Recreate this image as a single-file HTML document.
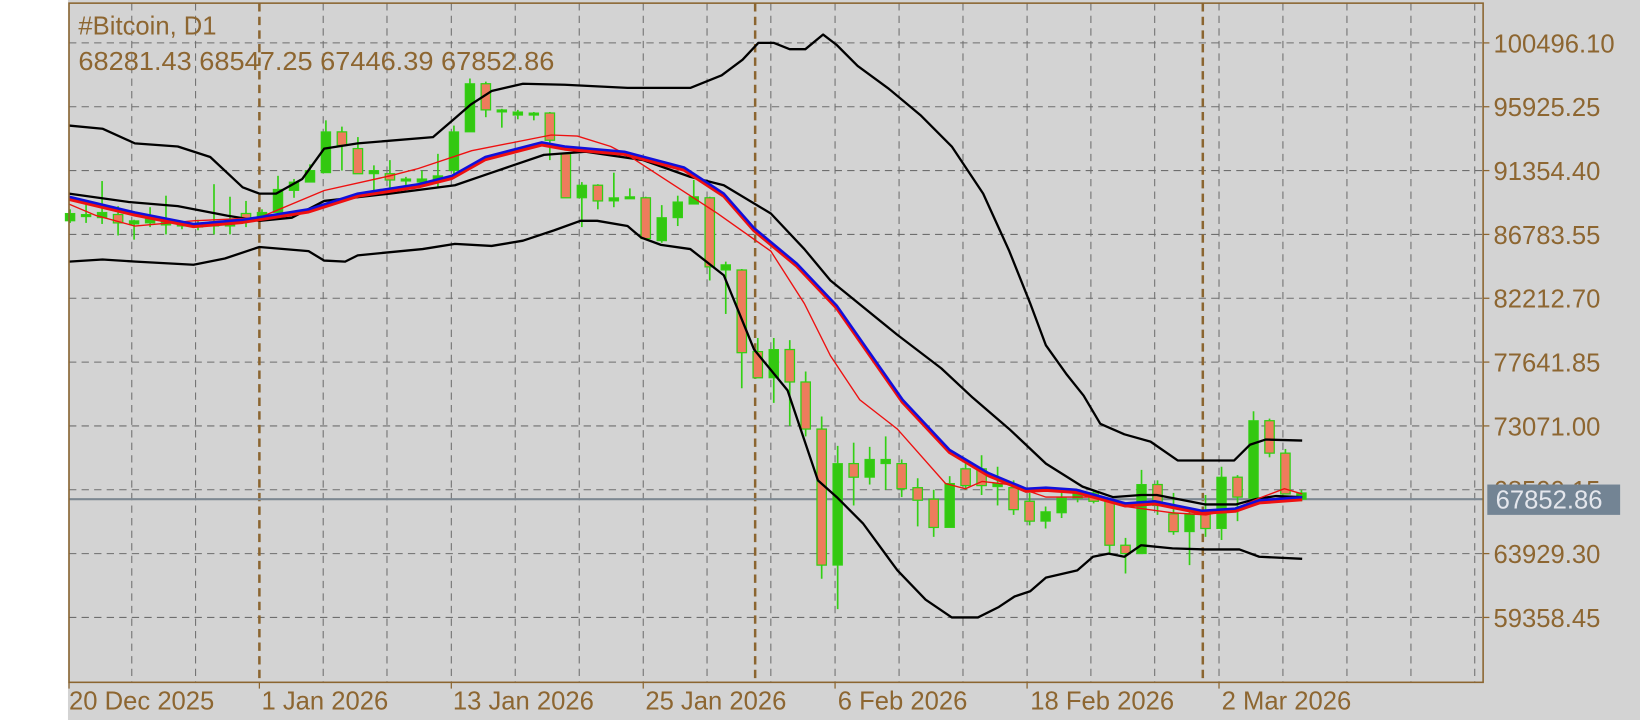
<!DOCTYPE html>
<html><head><meta charset="utf-8"><style>
html,body{margin:0;padding:0;background:#fff;}
svg{display:block;}
.g{stroke:#6e6e6e;stroke-width:1;stroke-dasharray:7,5;fill:none;}
.s{stroke:#8b6530;stroke-width:2.4;stroke-dasharray:8,5;fill:none;}
.w{stroke:#33d014;stroke-width:1.6;}
.u{fill:#33c811;stroke:#33d014;stroke-width:1;}
.d{fill:#ee7c5c;stroke:#33d014;stroke-width:1.2;}
.t{font-family:"Liberation Sans",sans-serif;font-size:24.5px;fill:#8d6631;}
.bb{fill:none;stroke:#000;stroke-width:2.2;stroke-linejoin:round;}
</style></head><body>
<svg width="1640" height="720" viewBox="0 0 1568 688" preserveAspectRatio="none" xmlns="http://www.w3.org/2000/svg">
<rect x="0" y="0" width="1568" height="688" fill="#fff"/>
<rect x="65" y="0" width="1503" height="688" fill="#d3d3d3"/>
<g class="g">
<line x1="66" x2="1418" y1="41" y2="41"/><line x1="66" x2="1418" y1="102" y2="102"/><line x1="66" x2="1418" y1="163" y2="163"/><line x1="66" x2="1418" y1="224" y2="224"/><line x1="66" x2="1418" y1="285" y2="285"/><line x1="66" x2="1418" y1="346" y2="346"/><line x1="66" x2="1418" y1="407" y2="407"/><line x1="66" x2="1418" y1="468" y2="468"/><line x1="66" x2="1418" y1="529" y2="529"/><line x1="66" x2="1418" y1="590" y2="590"/>
<line x1="126" x2="126" y1="3" y2="652"/><line x1="187" x2="187" y1="3" y2="652"/><line x1="309" x2="309" y1="3" y2="652"/><line x1="370" x2="370" y1="3" y2="652"/><line x1="431.5" x2="431.5" y1="3" y2="652"/><line x1="492.6" x2="492.6" y1="3" y2="652"/><line x1="553.8" x2="553.8" y1="3" y2="652"/><line x1="615" x2="615" y1="3" y2="652"/><line x1="676" x2="676" y1="3" y2="652"/><line x1="737" x2="737" y1="3" y2="652"/><line x1="798.4" x2="798.4" y1="3" y2="652"/><line x1="859.6" x2="859.6" y1="3" y2="652"/><line x1="920.7" x2="920.7" y1="3" y2="652"/><line x1="982" x2="982" y1="3" y2="652"/><line x1="1043" x2="1043" y1="3" y2="652"/><line x1="1104" x2="1104" y1="3" y2="652"/><line x1="1165.5" x2="1165.5" y1="3" y2="652"/><line x1="1226.6" x2="1226.6" y1="3" y2="652"/><line x1="1287.8" x2="1287.8" y1="3" y2="652"/><line x1="1349" x2="1349" y1="3" y2="652"/><line x1="1410" x2="1410" y1="3" y2="652"/>
</g>
<g class="s"><line x1="248" x2="248" y1="3" y2="652"/><line x1="722" x2="722" y1="3" y2="652"/><line x1="1150" x2="1150" y1="3" y2="652"/></g>
<line x1="66" x2="1418" y1="477" y2="477" stroke="#7d8892" stroke-width="2"/>
<g>
<line class="w" x1="67" x2="67" y1="200" y2="213"/><rect class="u" x="62.5" y="204" width="9" height="7"/>
<line class="w" x1="82.3" x2="82.3" y1="195" y2="213"/><rect class="u" x="77.8" y="205" width="9" height="2"/>
<line class="w" x1="97.6" x2="97.6" y1="173" y2="214"/><rect class="u" x="93.1" y="203" width="9" height="5"/>
<line class="w" x1="112.9" x2="112.9" y1="197" y2="225"/><rect class="d" x="108.4" y="205" width="9" height="8"/>
<line class="w" x1="128.2" x2="128.2" y1="210" y2="229"/><rect class="u" x="123.7" y="211" width="9" height="3"/>
<line class="w" x1="143.5" x2="143.5" y1="198" y2="217"/><rect class="u" x="139" y="209" width="9" height="4"/>
<line class="w" x1="158.7" x2="158.7" y1="187" y2="224"/><rect class="u" x="154.2" y="211" width="9" height="4"/>
<line class="w" x1="174" x2="174" y1="211" y2="219"/><rect class="u" x="169.5" y="214" width="9" height="2"/>
<line class="w" x1="189.3" x2="189.3" y1="210" y2="220"/><rect class="u" x="184.8" y="214" width="9" height="3"/>
<line class="w" x1="204.6" x2="204.6" y1="176" y2="224"/><rect class="u" x="200.1" y="212" width="9" height="4"/>
<line class="w" x1="219.9" x2="219.9" y1="188" y2="224"/><rect class="u" x="215.4" y="210" width="9" height="6"/>
<line class="w" x1="235.2" x2="235.2" y1="192" y2="217"/><rect class="d" x="230.7" y="204" width="9" height="5"/>
<line class="w" x1="250.5" x2="250.5" y1="200" y2="209"/><rect class="u" x="246" y="203" width="9" height="5"/>
<line class="w" x1="265.8" x2="265.8" y1="168" y2="204"/><rect class="u" x="261.3" y="181" width="9" height="22"/>
<line class="w" x1="281.1" x2="281.1" y1="171" y2="189"/><rect class="u" x="276.6" y="174" width="9" height="8"/>
<line class="w" x1="296.4" x2="296.4" y1="157" y2="174"/><rect class="u" x="291.9" y="163" width="9" height="11"/>
<line class="w" x1="311.6" x2="311.6" y1="115" y2="165"/><rect class="u" x="307.1" y="126" width="9" height="39"/>
<line class="w" x1="326.9" x2="326.9" y1="121" y2="163"/><rect class="d" x="322.4" y="126" width="9" height="13"/>
<line class="w" x1="342.2" x2="342.2" y1="131" y2="166"/><rect class="d" x="337.7" y="142" width="9" height="24"/>
<line class="w" x1="357.5" x2="357.5" y1="158" y2="184"/><rect class="u" x="353" y="163" width="9" height="3"/>
<line class="w" x1="372.8" x2="372.8" y1="153" y2="184"/><rect class="d" x="368.3" y="166" width="9" height="6"/>
<line class="w" x1="388.1" x2="388.1" y1="169" y2="177"/><rect class="u" x="383.6" y="171" width="9" height="2"/>
<line class="w" x1="403.4" x2="403.4" y1="163" y2="179"/><rect class="u" x="398.9" y="171" width="9" height="3"/>
<line class="w" x1="418.7" x2="418.7" y1="147" y2="179"/><rect class="u" x="414.2" y="168" width="9" height="5"/>
<line class="w" x1="434" x2="434" y1="120" y2="168"/><rect class="u" x="429.5" y="126" width="9" height="37"/>
<line class="w" x1="449.3" x2="449.3" y1="75" y2="126"/><rect class="u" x="444.8" y="80" width="9" height="46"/>
<line class="w" x1="464.5" x2="464.5" y1="78" y2="112"/><rect class="d" x="460" y="80" width="9" height="25"/>
<line class="w" x1="479.8" x2="479.8" y1="104" y2="122"/><rect class="u" x="475.3" y="105" width="9" height="2"/>
<line class="w" x1="495.1" x2="495.1" y1="105" y2="114"/><rect class="u" x="490.6" y="107" width="9" height="3"/>
<line class="w" x1="510.4" x2="510.4" y1="107" y2="115"/><rect class="u" x="505.9" y="108" width="9" height="2"/>
<line class="w" x1="525.7" x2="525.7" y1="107" y2="153"/><rect class="d" x="521.2" y="108" width="9" height="26"/>
<line class="w" x1="541" x2="541" y1="147" y2="189"/><rect class="d" x="536.5" y="147" width="9" height="42"/>
<line class="w" x1="556.3" x2="556.3" y1="174" y2="217"/><rect class="u" x="551.8" y="177" width="9" height="12"/>
<line class="w" x1="571.6" x2="571.6" y1="176" y2="200"/><rect class="d" x="567.1" y="177" width="9" height="15"/>
<line class="w" x1="586.9" x2="586.9" y1="165" y2="198"/><rect class="u" x="582.4" y="189" width="9" height="3"/>
<line class="w" x1="602.2" x2="602.2" y1="180" y2="190"/><rect class="u" x="597.7" y="188" width="9" height="2"/>
<line class="w" x1="617.4" x2="617.4" y1="188" y2="229"/><rect class="d" x="612.9" y="189" width="9" height="39"/>
<line class="w" x1="632.7" x2="632.7" y1="196" y2="232"/><rect class="u" x="628.2" y="208" width="9" height="22"/>
<line class="w" x1="648" x2="648" y1="187" y2="216"/><rect class="u" x="643.5" y="193" width="9" height="15"/>
<line class="w" x1="663.3" x2="663.3" y1="172" y2="195"/><rect class="u" x="658.8" y="188" width="9" height="7"/>
<line class="w" x1="678.6" x2="678.6" y1="188" y2="268"/><rect class="d" x="674.1" y="189" width="9" height="66"/>
<line class="w" x1="693.9" x2="693.9" y1="250" y2="300"/><rect class="u" x="689.4" y="253" width="9" height="5"/>
<line class="w" x1="709.2" x2="709.2" y1="257" y2="371"/><rect class="d" x="704.7" y="258" width="9" height="79"/>
<line class="w" x1="724.5" x2="724.5" y1="323" y2="361"/><rect class="d" x="720" y="336" width="9" height="25"/>
<line class="w" x1="739.8" x2="739.8" y1="323" y2="385"/><rect class="u" x="735.3" y="334" width="9" height="27"/>
<line class="w" x1="755.1" x2="755.1" y1="325" y2="407"/><rect class="d" x="750.6" y="334" width="9" height="31"/>
<line class="w" x1="770.3" x2="770.3" y1="355" y2="417"/><rect class="d" x="765.8" y="365" width="9" height="45"/>
<line class="w" x1="785.6" x2="785.6" y1="398" y2="553"/><rect class="d" x="781.1" y="410" width="9" height="130"/>
<line class="w" x1="800.9" x2="800.9" y1="426" y2="582"/><rect class="u" x="796.4" y="443" width="9" height="97"/>
<line class="w" x1="816.2" x2="816.2" y1="423" y2="483"/><rect class="d" x="811.7" y="443" width="9" height="13"/>
<line class="w" x1="831.5" x2="831.5" y1="427" y2="463"/><rect class="u" x="827" y="439" width="9" height="17"/>
<line class="w" x1="846.8" x2="846.8" y1="417" y2="468"/><rect class="u" x="842.3" y="439" width="9" height="4"/>
<line class="w" x1="862.1" x2="862.1" y1="439" y2="475"/><rect class="d" x="857.6" y="443" width="9" height="24"/>
<line class="w" x1="877.4" x2="877.4" y1="457" y2="503"/><rect class="d" x="872.9" y="466" width="9" height="12"/>
<line class="w" x1="892.7" x2="892.7" y1="468" y2="513"/><rect class="d" x="888.2" y="477" width="9" height="27"/>
<line class="w" x1="908" x2="908" y1="455" y2="504"/><rect class="u" x="903.5" y="462" width="9" height="42"/>
<line class="w" x1="923.2" x2="923.2" y1="441" y2="468"/><rect class="d" x="918.7" y="448" width="9" height="16"/>
<line class="w" x1="938.5" x2="938.5" y1="435" y2="473"/><rect class="d" x="934" y="448" width="9" height="16"/>
<line class="w" x1="953.8" x2="953.8" y1="446" y2="483"/><rect class="u" x="949.3" y="462" width="9" height="3"/>
<line class="w" x1="969.1" x2="969.1" y1="459" y2="492"/><rect class="d" x="964.6" y="466" width="9" height="21"/>
<line class="w" x1="984.4" x2="984.4" y1="471" y2="502"/><rect class="d" x="979.9" y="479" width="9" height="19"/>
<line class="w" x1="999.7" x2="999.7" y1="484" y2="505"/><rect class="u" x="995.2" y="489" width="9" height="9"/>
<line class="w" x1="1015" x2="1015" y1="471" y2="495"/><rect class="u" x="1010.5" y="476" width="9" height="14"/>
<line class="w" x1="1030.3" x2="1030.3" y1="468" y2="480"/><rect class="u" x="1025.8" y="471" width="9" height="5"/>
<line class="w" x1="1045.6" x2="1045.6" y1="468" y2="481"/><rect class="d" x="1041.1" y="471" width="9" height="8"/>
<line class="w" x1="1060.9" x2="1060.9" y1="478" y2="529"/><rect class="d" x="1056.4" y="479" width="9" height="42"/>
<line class="w" x1="1076.1" x2="1076.1" y1="514" y2="548"/><rect class="d" x="1071.6" y="521" width="9" height="8"/>
<line class="w" x1="1091.4" x2="1091.4" y1="449" y2="529"/><rect class="u" x="1086.9" y="463" width="9" height="66"/>
<line class="w" x1="1106.7" x2="1106.7" y1="459" y2="492"/><rect class="d" x="1102.2" y="463" width="9" height="20"/>
<line class="w" x1="1122" x2="1122" y1="471" y2="511"/><rect class="d" x="1117.5" y="491" width="9" height="17"/>
<line class="w" x1="1137.3" x2="1137.3" y1="486" y2="540"/><rect class="u" x="1132.8" y="491" width="9" height="17"/>
<line class="w" x1="1152.6" x2="1152.6" y1="473" y2="513"/><rect class="d" x="1148.1" y="491" width="9" height="14"/>
<line class="w" x1="1167.9" x2="1167.9" y1="446" y2="516"/><rect class="u" x="1163.4" y="456" width="9" height="49"/>
<line class="w" x1="1183.2" x2="1183.2" y1="454" y2="498"/><rect class="d" x="1178.7" y="456" width="9" height="19"/>
<line class="w" x1="1198.5" x2="1198.5" y1="393" y2="476"/><rect class="u" x="1194" y="402" width="9" height="74"/>
<line class="w" x1="1213.8" x2="1213.8" y1="400" y2="437"/><rect class="d" x="1209.3" y="402" width="9" height="31"/>
<line class="w" x1="1229" x2="1229" y1="429" y2="472"/><rect class="d" x="1224.5" y="433" width="9" height="39"/>
<line class="w" x1="1244.3" x2="1244.3" y1="468" y2="479"/><rect class="u" x="1239.8" y="471" width="9" height="6"/>
</g>
<polyline class="bb" points="66,120 98,123 129,137 170,140 201,150 232,179 248,185 264,185 289,171 310,142 342,137 414,131 435,113 450,100 470,87 500,80 540,81 600,84 660,84 690,72 710,57 725,41 740,41 755,47 770,47 787,33 800,43 820,63 850,85 880,110 910,140 940,185 965,240 985,290 1000,330 1020,358 1036,378 1052,405 1075,415 1100,422 1126,440 1180,440 1195,425 1210,420 1245,421"/>
<polyline class="bb" points="66,185 123,193 170,197 217,206 248,211 279,208 310,192 373,185 435,177 470,165 520,148 560,145 615,153 660,169 692,177 737,204 769,238 794,268 858,320 900,352 930,380 965,410 1000,443 1035,465 1064,475 1091,473 1106,473 1152,482 1182,482 1200,477 1220,474 1245,475"/>
<polyline class="bb" points="66,250 98,248 130,250 185,253 215,247 248,236 295,240 310,249 330,250 342,244 404,238 435,233 470,235 500,230 530,220 555,211 571,211 600,216 613,227 632,234 660,238 692,263 721,334 753,373 782,459 800,475 825,500 858,545 885,573 910,590 935,590 955,580 970,570 985,565 1000,552 1030,545 1045,532 1060,529 1075,532 1091,521 1121,524 1152,525 1185,525 1204,532 1245,534"/>
<polyline fill="none" stroke="#ee1010" stroke-width="1.3" points="66,195 92,206 129,216 185,211 248,208 310,182 373,168 400,161 451,144 527,129 552,130 584,140 603,150 686,204 737,240 769,290 794,340 822,382 858,410 904,462 923,467 939,460 965,463 1000,475 1045,475 1076,484 1121,490 1153,492 1181,486 1204,476 1228,467 1245,472"/>
<polyline fill="none" stroke="#ee1010" stroke-width="3.4" stroke-linejoin="round" transform="translate(0,2.3)" points="66,188 129,203 185,214 232,210 295,200 342,185 400,176 432,168 464,150 518,136 540,140 597,145 654,160 692,185 721,218 762,252 800,292 863,382 908,430 945,452 981,467 1000,466 1029,468 1076,481 1104,479 1149,488 1181,486 1204,478 1245,475"/>
<polyline fill="none" stroke="#1010dd" stroke-width="2.4" stroke-linejoin="round" points="66,188 129,203 185,214 232,210 295,200 342,185 400,176 432,168 464,150 518,136 540,140 597,145 654,160 692,185 721,218 762,252 800,292 863,382 908,430 945,452 981,467 1000,466 1029,468 1076,481 1104,479 1149,488 1181,486 1204,478 1245,475"/>
<rect x="66" y="3" width="1352" height="649" fill="none" stroke="#8b6530" stroke-width="1.5"/>
<g stroke="#8b6530" stroke-width="1.2">
<line x1="1418" x2="1424" y1="41" y2="41"/><line x1="1418" x2="1424" y1="102" y2="102"/><line x1="1418" x2="1424" y1="163" y2="163"/><line x1="1418" x2="1424" y1="224" y2="224"/><line x1="1418" x2="1424" y1="285" y2="285"/><line x1="1418" x2="1424" y1="346" y2="346"/><line x1="1418" x2="1424" y1="407" y2="407"/><line x1="1418" x2="1424" y1="529" y2="529"/><line x1="1418" x2="1424" y1="590" y2="590"/>
<line x1="66" x2="66" y1="652" y2="658"/><line x1="248" x2="248" y1="652" y2="658"/><line x1="431.5" x2="431.5" y1="652" y2="658"/><line x1="615" x2="615" y1="652" y2="658"/><line x1="798.4" x2="798.4" y1="652" y2="658"/><line x1="982" x2="982" y1="652" y2="658"/><line x1="1165.5" x2="1165.5" y1="652" y2="658"/>
</g>
<text class="t" x="75" y="33">#Bitcoin, D1</text>
<text class="t" x="75" y="67" textLength="455" lengthAdjust="spacingAndGlyphs">68281.43 68547.25 67446.39 67852.86</text>
<g class="t">
<text x="1428" y="50">100496.10</text>
<text x="1428" y="111">95925.25</text>
<text x="1428" y="172">91354.40</text>
<text x="1428" y="233">86783.55</text>
<text x="1428" y="294">82212.70</text>
<text x="1428" y="355">77641.85</text>
<text x="1428" y="416">73071.00</text>
<text x="1428" y="477">68500.15</text>
<text x="1428" y="538">63929.30</text>
<text x="1428" y="599">59358.45</text>
</g>
<rect x="1422" y="463" width="127" height="29" fill="#738494"/>
<text x="1430" y="486" font-family="Liberation Sans, sans-serif" font-size="24.5" fill="#e4e6ec">67852.86</text>
<g class="t">
<text x="66" y="678">20 Dec 2025</text>
<text x="250" y="678">1 Jan 2026</text>
<text x="433" y="678">13 Jan 2026</text>
<text x="617" y="678">25 Jan 2026</text>
<text x="801" y="678">6 Feb 2026</text>
<text x="985" y="678">18 Feb 2026</text>
<text x="1168" y="678">2 Mar 2026</text>
</g>
</svg>
</body></html>
